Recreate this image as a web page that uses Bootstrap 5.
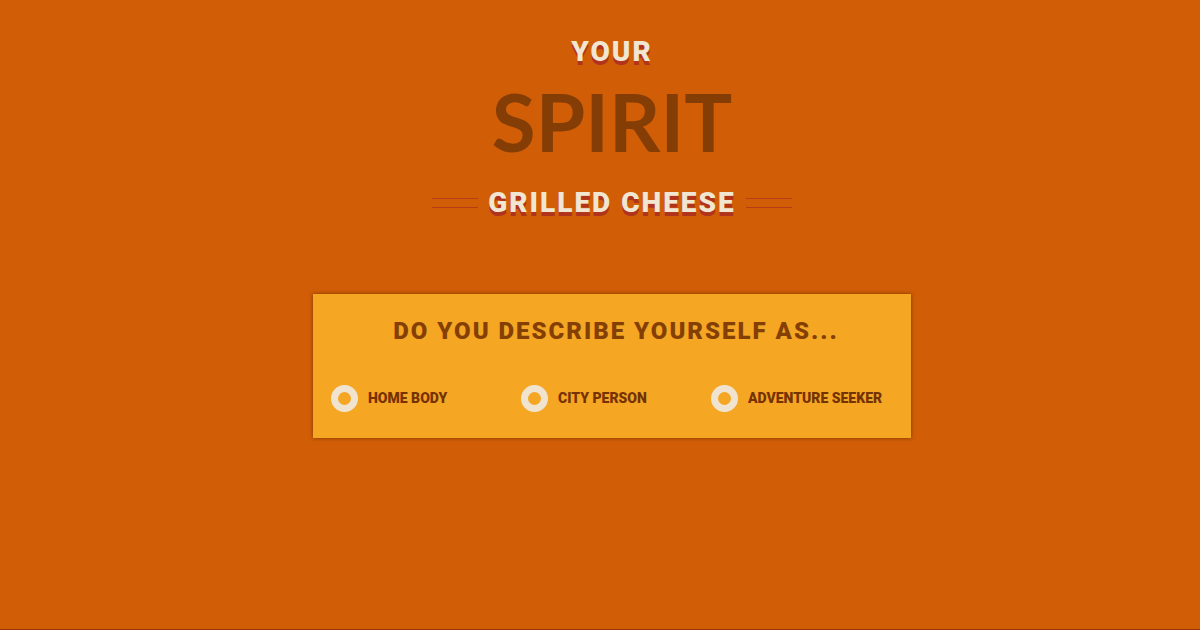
<!DOCTYPE html>
<html lang="en">
<head>
<meta charset="utf-8">
<meta name="viewport" content="width=device-width, initial-scale=1">
<title>Your Spirit Grilled Cheese</title>
<link href="https://cdn.jsdelivr.net/npm/bootstrap@5.3.0/dist/css/bootstrap.min.css" rel="stylesheet">
<style>
  body { background: #d15e06; font-family: Roboto, "Liberation Sans", sans-serif; color: #843f05; border-bottom: 1px solid #963407; }
  main { padding: 36px 0 24px 24px; }
  .title-line { font-size: 28px; line-height: 32px; font-weight: 900; letter-spacing: 2px; color: #f1e6d2; text-shadow: 0 4px 0 #b0331d; gap: 10px; }
  .title-spirit { font-family: Lato, sans-serif; font-size: 80px; line-height: 96px; font-weight: 700; color: #853d06; margin: 5px 0 18px; }
  .rules { width: 46px; height: 10px; border-top: 1px solid #b93c16; border-bottom: 1px solid #b93c16; }
  .quiz { max-width: 598px; margin: 75px auto 0; padding: 24px 10px 26px 18px; background: #f5a623; box-shadow: 0 0 4px rgba(90, 35, 0, .7); }
  .question { font-size: 24px; line-height: 26px; font-weight: 900; letter-spacing: 2px; margin-bottom: 40px; }
  .answer { font-size: 14px; line-height: 28px; font-weight: 900; color: #753203; gap: 10px; }
  .answer input { appearance: none; width: 27px; height: 27px; margin: 0; border: 7px solid #f0e4d0; border-radius: 50%; flex: none; }
  .answer input:checked { background: #753203; }
</style>
</head>
<body class="min-vh-100">
<main>
  <h1 class="m-0 text-center text-uppercase">
    <span class="title-line d-block">Your</span>
    <span class="title-spirit d-block">Spirit</span>
    <span class="title-line d-flex justify-content-center align-items-center"><span class="rules"></span>Grilled Cheese<span class="rules"></span></span>
  </h1>
  <form class="quiz">
    <h2 class="question text-center text-uppercase" id="question">Do you describe yourself as...</h2>
    <div class="row g-0 text-uppercase" role="radiogroup" aria-labelledby="question">
      <div class="col-sm-4 answer d-flex align-items-center"><input type="radio" name="kind" id="home"><label for="home" class="text-nowrap">Home body</label></div>
      <div class="col-sm-4 answer d-flex align-items-center"><input type="radio" name="kind" id="city"><label for="city" class="text-nowrap">City person</label></div>
      <div class="col-sm-4 answer d-flex align-items-center"><input type="radio" name="kind" id="adventure"><label for="adventure" class="text-nowrap">Adventure seeker</label></div>
    </div>
  </form>
</main>
<script src="https://cdn.jsdelivr.net/npm/bootstrap@5.3.0/dist/js/bootstrap.bundle.min.js"></script>
</body>
</html>
